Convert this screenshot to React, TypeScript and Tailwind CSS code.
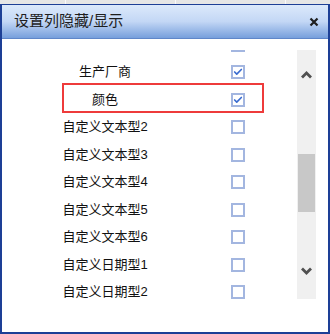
import { Check } from "lucide-react"

// first row is scrolled mostly out of view: only its checkbox edge shows
const ROWS: { label: string; checked: boolean }[] = [
  { label: "", checked: true },
  { label: "生产厂商", checked: true },
  { label: "颜色", checked: true },
  { label: "自定义文本型2", checked: false },
  { label: "自定义文本型3", checked: false },
  { label: "自定义文本型4", checked: false },
  { label: "自定义文本型5", checked: false },
  { label: "自定义文本型6", checked: false },
  { label: "自定义日期型1", checked: false },
  { label: "自定义日期型2", checked: false },
]

function Box({ checked }: { checked: boolean }) {
  return (
    <div className="w-[14px] h-[14px] border-2 border-[#a3b6e0] bg-white flex items-center justify-center shrink-0">
      {checked && <Check className="w-[10px] h-[10px] text-[#3a6cd0]" strokeWidth={4} />}
    </div>
  )
}

export default function App() {
  return (
    <div
      className="relative w-[330px] h-[334px] overflow-hidden bg-white"
      style={{ fontFamily: '"Liberation Sans", "Noto Sans CJK SC", sans-serif' }}
    >
      {/* grid header behind the dialog */}
      <div className="h-[4px] flex bg-[#e6e6e6]">
        <div className="w-[66px] border-r border-[#fafafa]" />
        <div className="w-[110px] border-r border-[#fafafa]" />
        <div className="w-[110px] border-r border-[#fafafa]" />
        <div className="flex-1" />
      </div>

      <div className="h-[330px] flex flex-col border-t border-x-2 border-b-2 border-[#1d3f96]">
        <div className="h-[34px] flex items-center justify-between pl-[12px] pr-[9px] bg-gradient-to-b from-[#dce9fb] via-[#c3d7f5] to-[#779fdc] border-b border-[#5f86c9]">
          <span className="text-[15px] text-[#1e1e1e]">设置列隐藏/显示</span>
          <svg width="10" height="10" viewBox="0 0 10 10">
            <path d="M1.5 1.5 L8.5 8.5 M8.5 1.5 L1.5 8.5" stroke="#1f1f1f" strokeWidth="2.2" />
          </svg>
        </div>

        <div className="flex-1 flex">
          <div className="mt-[11px] w-[295px] h-[250px] overflow-hidden">
            <div className="mt-[-19.25px]">
              {ROWS.map((r, i) => (
                <div key={i} className="h-[27.5px] flex items-center">
                  <div className="ml-[8px] w-[190px] text-center text-[13px] text-[#111]">{r.label}</div>
                  <div className="ml-[31px]">
                    <Box checked={r.checked} />
                  </div>
                </div>
              ))}
            </div>
          </div>

          <div className="mt-[11px] w-[19px] h-[249px] bg-[#f0f0f0] flex flex-col items-center">
            <svg className="mt-[21px]" width="11" height="8" viewBox="0 0 11 8">
              <path d="M1 6.5 L5.5 2 L10 6.5" fill="none" stroke="#505050" strokeWidth="2.8" />
            </svg>
            <div className="mt-[75px] w-[17px] h-[58px] bg-[#c8c8c8]" />
            <svg className="mt-[55px]" width="11" height="8" viewBox="0 0 11 8">
              <path d="M1 1.5 L5.5 6 L10 1.5" fill="none" stroke="#505050" strokeWidth="2.8" />
            </svg>
          </div>
        </div>
      </div>

      {/* annotation highlight */}
      <div className="absolute left-[62px] top-[83px] w-[202px] h-[30px] border-2 border-[#ee3b3b]" />
    </div>
  )
}
